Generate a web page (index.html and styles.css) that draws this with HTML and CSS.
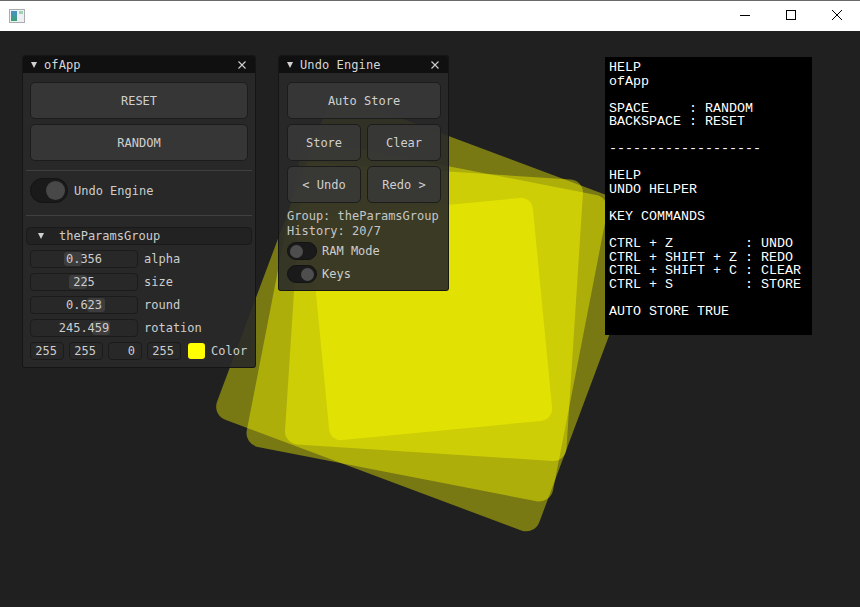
FILE: index.html
```html
<!DOCTYPE html>
<html>
<head>
<meta charset="utf-8">
<link rel="stylesheet" href="styles.css">
</head>
<body>
<div class="window">
  <div class="titlebar">
    <svg class="app-icon" width="16" height="14" viewBox="0 0 16 14">
      <defs>
        <linearGradient id="ig" x1="0" y1="0" x2="0" y2="1">
          <stop offset="0" stop-color="#4a8fd0"/>
          <stop offset="1" stop-color="#3aa070"/>
        </linearGradient>
      </defs>
      <rect x="0.5" y="0.5" width="15" height="13" fill="#eef0f2" stroke="#a9adb2"/>
      <rect x="2" y="2" width="6" height="10" fill="url(#ig)"/>
      <rect x="10" y="2" width="4" height="3" fill="#9fd3b8"/>
    </svg>
    <div class="controls">
      <svg width="46" height="31" viewBox="0 0 46 31"><line x1="18" y1="15.5" x2="28" y2="15.5" stroke="#000" stroke-width="1"/></svg>
      <svg width="46" height="31" viewBox="0 0 46 31"><rect x="18.5" y="10.5" width="9" height="9" fill="none" stroke="#000" stroke-width="1"/></svg>
      <svg width="46" height="31" viewBox="0 0 46 31"><path d="M18 10 L28 20 M28 10 L18 20" stroke="#000" stroke-width="1"/></svg>
    </div>
  </div>

  <div class="stage">
    <svg class="shapes" width="860" height="576" viewBox="0 0 860 576">
      <g fill="#ffff00" fill-opacity="0.4">
        <rect x="-172" y="-172" width="344" height="344" rx="14" transform="translate(433.5 283) rotate(20.5)"/>
        <rect x="-156" y="-156" width="312" height="312" rx="14" transform="translate(427 290) rotate(11)"/>
        <rect x="-141" y="-141" width="282" height="282" rx="13" transform="translate(434 281) rotate(3.7)"/>
        <rect x="-112" y="-112" width="224" height="224" rx="12" transform="translate(431 288) rotate(-5.5)"/>
      </g>
    </svg>

    <div class="panel panel-app">
      <div class="panel-title">
        <span class="tri"></span>
        <span class="title-text">ofApp</span>
        <svg class="close" width="8" height="8" viewBox="0 0 8 8"><path d="M0.5 0.5 L7.5 7.5 M7.5 0.5 L0.5 7.5" stroke="#cfcfcf" stroke-width="1.1"/></svg>
      </div>
      <div class="panel-body">
        <div class="btn big">RESET</div>
        <div class="btn big gap5">RANDOM</div>
        <div class="sep sep1"></div>
        <div class="toggle-row big-toggle-row">
          <div class="toggle big-toggle on"><span class="knob"></span></div>
          <span class="label">Undo Engine</span>
        </div>
        <div class="sep sep2"></div>
        <div class="tree">
          <span class="tri tree-tri"></span>
          <span>theParamsGroup</span>
        </div>
        <div class="slider-row first">
          <div class="field"><span class="grab" style="left:33px"></span><span class="val">0.356</span></div>
          <span class="label">alpha</span>
        </div>
        <div class="slider-row">
          <div class="field"><span class="grab" style="left:38px"></span><span class="val">225</span></div>
          <span class="label">size</span>
        </div>
        <div class="slider-row">
          <div class="field"><span class="grab" style="left:56px"></span><span class="val">0.623</span></div>
          <span class="label">round</span>
        </div>
        <div class="slider-row">
          <div class="field"><span class="grab" style="left:61px"></span><span class="val">245.459</span></div>
          <span class="label">rotation</span>
        </div>
        <div class="color-row">
          <div class="cbox">255</div>
          <div class="cbox">255</div>
          <div class="cbox">0</div>
          <div class="cbox">255</div>
          <div class="swatch"></div>
          <span class="label">Color</span>
        </div>
      </div>
    </div>

    <div class="panel panel-undo">
      <div class="panel-title">
        <span class="tri"></span>
        <span class="title-text">Undo Engine</span>
        <svg class="close" width="8" height="8" viewBox="0 0 8 8"><path d="M0.5 0.5 L7.5 7.5 M7.5 0.5 L0.5 7.5" stroke="#cfcfcf" stroke-width="1.1"/></svg>
      </div>
      <div class="panel-body">
        <div class="btn big">Auto Store</div>
        <div class="btn-grid">
          <div class="btn big">Store</div>
          <div class="btn big">Clear</div>
          <div class="btn big">&lt; Undo</div>
          <div class="btn big">Redo &gt;</div>
        </div>
        <div class="info">
          <div>Group: theParamsGroup</div>
          <div>History: 20/7</div>
        </div>
        <div class="toggle-row small-row first-small">
          <div class="toggle small-toggle"><span class="knob"></span></div>
          <span class="label">RAM Mode</span>
        </div>
        <div class="toggle-row small-row">
          <div class="toggle small-toggle on"><span class="knob"></span></div>
          <span class="label">Keys</span>
        </div>
      </div>
    </div>

<pre class="help">HELP
ofApp

SPACE     : RANDOM
BACKSPACE : RESET

-------------------

HELP
UNDO HELPER

KEY COMMANDS

CTRL + Z         : UNDO
CTRL + SHIFT + Z : REDO
CTRL + SHIFT + C : CLEAR
CTRL + S         : STORE

AUTO STORE TRUE</pre>
  </div>
</div>
</body>
</html>
```

FILE: styles.css
```css
html, body {
  margin: 0;
  padding: 0;
  background: #202020;
}

.window {
  width: 860px;
  height: 607px;
  overflow: hidden;
  display: flex;
  flex-direction: column;
  background: #202020;
}

.titlebar {
  height: 31px;
  flex: 0 0 31px;
  background: #ffffff;
  border-top: 1px solid #6a6a6a;
  box-sizing: border-box;
  display: flex;
  align-items: center;
  justify-content: space-between;
}

.app-icon {
  margin-left: 9px;
  margin-top: -1px;
}

.controls {
  display: flex;
  margin-top: -1px;
}

.controls svg {
  display: block;
}

.stage {
  position: relative;
  flex: 1;
  font-family: "DejaVu Sans Mono", monospace;
  font-size: 12px;
  color: #cdcdcd;
}

.shapes {
  position: absolute;
  left: 0;
  top: 0;
}

/* ---------- ImGui-like panels ---------- */
.panel {
  position: absolute;
  box-sizing: border-box;
  background: rgba(41, 41, 41, 0.9);
  border: 1px solid rgba(20, 20, 20, 0.9);
  border-radius: 3px;
  display: flex;
  flex-direction: column;
}

.panel-app {
  left: 22px;
  top: 24px;
  width: 234px;
  height: 313px;
}

.panel-undo {
  left: 278px;
  top: 24px;
  width: 171px;
  height: 236px;
}

.panel-title {
  height: 17px;
  flex: 0 0 17px;
  background: rgba(16, 16, 16, 0.97);
  display: flex;
  align-items: center;
  padding: 0 8px 0 8px;
  color: #d6d6d6;
  border-radius: 2px 2px 0 0;
}

.tri {
  width: 0;
  height: 0;
  border-left: 3.5px solid transparent;
  border-right: 3.5px solid transparent;
  border-top: 6px solid #d0d0d0;
  margin-right: 7px;
}

.title-text {
  flex: 1;
  letter-spacing: 0.1px;
}

.close {
  display: block;
  margin-right: 1px;
}

.panel-body {
  padding: 9px 7px 0 7px;
  display: flex;
  flex-direction: column;
}

.panel-undo .panel-body {
  padding-left: 8px;
}

.btn {
  box-sizing: border-box;
  background: rgba(56, 56, 56, 0.85);
  border: 1px solid #1c1c1c;
  border-radius: 5px;
  display: flex;
  align-items: center;
  justify-content: center;
  color: #cfcfcf;
}

.btn.big {
  height: 37px;
}

.gap5 {
  margin-top: 5px;
}

.btn-grid {
  margin-top: 5px;
  display: grid;
  grid-template-columns: 1fr 1fr;
  gap: 5px 6px;
}

.sep {
  height: 1px;
  background: #404040;
  margin-left: -4px;
  margin-right: -4px;
}

.sep1 {
  margin-top: 9px;
}

.sep2 {
  margin-top: 12px;
}

.toggle-row {
  display: flex;
  align-items: center;
}

.big-toggle-row {
  margin-top: 7px;
}

.big-toggle-row .label {
  margin-left: 6px;
}

.toggle {
  position: relative;
  box-sizing: border-box;
  background: #1a1a1a;
  border: 1px solid #131313;
}

.big-toggle {
  width: 38px;
  height: 25px;
  border-radius: 13px;
}

.big-toggle .knob {
  position: absolute;
  top: 2px;
  left: 15px;
  width: 19px;
  height: 19px;
  border-radius: 50%;
  background: #484848;
}

.small-toggle {
  width: 30px;
  height: 18px;
  border-radius: 9px;
}

.small-toggle .knob {
  position: absolute;
  top: 1.5px;
  left: 2px;
  width: 13px;
  height: 13px;
  border-radius: 50%;
  background: #4e4e4e;
}

.small-toggle.on .knob {
  left: 13px;
}

.small-row .label {
  margin-left: 5px;
}

.first-small {
  margin-top: 3px;
}

.small-row + .small-row {
  margin-top: 5px;
}

.tree {
  margin-top: 11px;
  margin-left: -4px;
  margin-right: -4px;
  height: 18px;
  box-sizing: border-box;
  background: rgba(33, 33, 33, 0.9);
  border: 1px solid #1a1a1a;
  border-radius: 4px;
  display: flex;
  align-items: center;
  padding-left: 11px;
}

.tree-tri {
  margin-right: 15px;
}

.slider-row {
  display: flex;
  align-items: center;
  margin-top: 5px;
  height: 18px;
}

.field {
  position: relative;
  width: 108px;
  height: 18px;
  box-sizing: border-box;
  background: rgba(40, 40, 40, 0.9);
  border: 1px solid #1b1b1b;
  border-radius: 4px;
  display: flex;
  align-items: center;
  justify-content: center;
}

.grab {
  position: absolute;
  top: 1px;
  bottom: 1px;
  width: 18px;
  background: #3d3d3d;
  border-radius: 3px;
}

.val {
  position: relative;
}

.slider-row .label {
  margin-left: 6px;
}

.color-row {
  display: flex;
  align-items: center;
  margin-top: 5px;
  height: 18px;
}

.cbox {
  width: 34px;
  height: 18px;
  box-sizing: border-box;
  background: rgba(40, 40, 40, 0.9);
  border: 1px solid #1b1b1b;
  border-radius: 4px;
  display: flex;
  align-items: center;
  justify-content: flex-end;
  padding-right: 6px;
  margin-right: 5px;
}

.swatch {
  width: 17px;
  height: 16px;
  background: #ffff00;
  border-radius: 3px;
  margin-left: 2px;
}

.color-row .label {
  margin-left: 6px;
}

.info {
  margin-top: 6px;
  line-height: 15px;
  color: #c6c6c6;
}

/* ---------- help box ---------- */
.help {
  position: absolute;
  left: 605px;
  top: 26px;
  width: 207px;
  height: 278px;
  box-sizing: border-box;
  margin: 0;
  padding: 4px 0 0 4px;
  background: #000000;
  color: #ffffff;
  font-family: "Liberation Mono", monospace;
  font-size: 13.33px;
  line-height: 13.55px;
}
```
